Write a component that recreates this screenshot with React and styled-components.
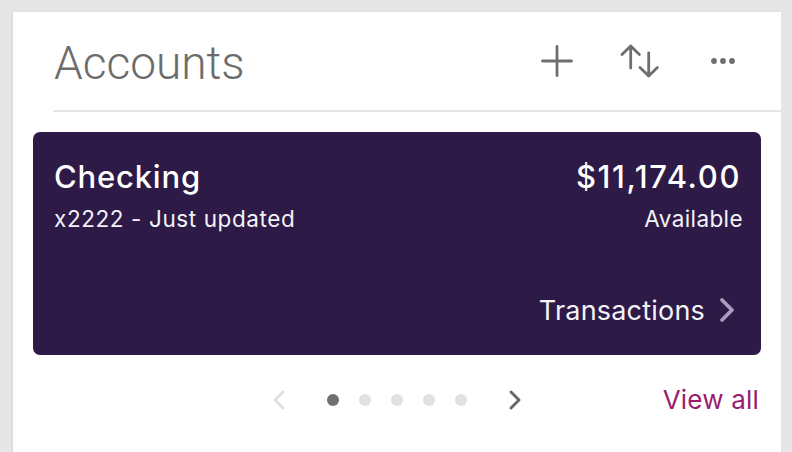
import React from "react";
import styled, { createGlobalStyle } from "styled-components";

const Global = createGlobalStyle`
  html, body { margin: 0; padding: 0; }
  body {
    background: #e6e6e6;
    font-family: Inter, "Noto Sans", sans-serif;
    width: 792px;
    height: 452px;
    overflow: hidden;
  }
`;

const Panel = styled.section`
  margin: 12px 11px 0 13px;
  height: 460px;
  background: #ffffff;
  box-shadow: -1px 0 3px rgba(0, 0, 0, 0.06);
  display: flex;
  flex-direction: column;
`;

const Header = styled.header`
  height: 98px;
  display: flex;
  align-items: center;
  padding: 0 44px 0 1px;
  border-bottom: 2px solid #e6e6e6;
  margin-left: 40px;
`;

const Title = styled.h1`
  flex: 1;
  margin: 0;
  font-family: Roboto, "Liberation Sans", sans-serif;
  font-weight: 300;
  font-size: 46px;
  color: #6c6c6c;
  letter-spacing: 0px;
  padding-top: 4px;
`;

const Actions = styled.div`
  display: flex;
  align-items: center;
`;

const IconButton = styled.button`
  background: none;
  border: 0;
  padding: 0;
  margin-left: ${(p) => p.$gap || 0}px;
  display: flex;
  align-items: center;
  justify-content: center;
  color: #6e6e6e;
`;

const AccountCard = styled.div`
  margin: 20px 20px 0 20px;
  height: 223px;
  background: #2d1a46;
  border-radius: 7px;
  color: #ffffff;
  padding: 26px 21px 0 21px;
  box-sizing: border-box;
  display: flex;
  flex-direction: column;
`;

const CardTop = styled.div`
  display: flex;
  justify-content: space-between;
  align-items: flex-start;
`;

const Col = styled.div`
  display: flex;
  flex-direction: column;
  align-items: ${(p) => (p.$right ? "flex-end" : "flex-start")};
`;

const Name = styled.div`
  font-size: 31px;
  font-weight: 500;
  line-height: 38px;
  letter-spacing: 0.8px;
`;

const Amount = styled.div`
  font-size: 31px;
  font-weight: 500;
  line-height: 38px;
  letter-spacing: 1.6px;
  margin-right: -1px;
`;

const Sub = styled.div`
  font-size: 22.5px;
  line-height: 28px;
  margin-top: 9px;
  letter-spacing: ${(p) => (p.$wide ? 0.4 : 0.6)}px;
  margin-right: ${(p) => (p.$wide ? -3 : 0)}px;
  color: #f4f2f7;
`;

const CardFooter = styled.div`
  margin-top: auto;
  display: flex;
  justify-content: flex-end;
  align-items: center;
  height: 78px;
  padding-bottom: 12px;
  box-sizing: border-box;
  margin-right: 5px;
`;

const FooterLink = styled.a`
  display: flex;
  align-items: center;
  gap: 14px;
  font-size: 27px;
  letter-spacing: 0.2px;
  color: #f4f2f7;
  text-decoration: none;
`;

const BottomRow = styled.div`
  display: grid;
  grid-template-columns: 1fr auto 1fr;
  align-items: center;
  height: 88px;
  padding-top: 2px;
`;

const Pager = styled.div`
  grid-column: 2;
  display: flex;
  align-items: center;
  margin-top: -2px;
`;

const Dots = styled.div`
  display: flex;
  gap: 20px;
  margin: 0 41px;
`;

const Dot = styled.span`
  width: 12px;
  height: 12px;
  border-radius: 50%;
  background: ${(p) => (p.$active ? "#707070" : "#e2e2e2")};
`;

const ViewAll = styled.a`
  grid-column: 3;
  justify-self: end;
  margin-right: 22px;
  font-size: 26px;
  letter-spacing: 0.2px;
  color: #9a1d6d;
  text-decoration: none;
  margin-top: -3px;
`;

const Chevron = ({ dir = "right", color, w = 14, h = 24, sw = 3 }) => (
  <svg width={w} height={h} viewBox={`0 0 ${w} ${h}`} fill="none">
    <path
      d={
        dir === "right"
          ? `M3 4 L${w - 3} ${h / 2} L3 ${h - 4}`
          : `M${w - 3} 4 L3 ${h / 2} L${w - 3} ${h - 4}`
      }
      stroke={color}
      strokeWidth={sw}
      strokeLinecap="round"
      strokeLinejoin="round"
    />
  </svg>
);

export default function App() {
  return (
    <>
      <Global />
      <Panel>
        <Header>
          <Title>Accounts</Title>
          <Actions>
            <IconButton aria-label="Add">
              <svg width="32" height="32" viewBox="0 0 32 32">
                <path d="M16 1.5 V30.5 M1.5 16 H30.5" stroke="#6e6e6e" strokeWidth="2.8" strokeLinecap="round" />
              </svg>
            </IconButton>
            <IconButton aria-label="Sort" $gap={45}>
              <svg width="42" height="36" viewBox="0 0 42 36" fill="none">
                <path d="M12.7 3 V25 M4 11.5 L12.7 3 L21.4 11.5" stroke="#6e6e6e" strokeWidth="2.8" strokeLinecap="round" strokeLinejoin="round" />
                <path d="M30.7 10 V33 M22 24.5 L30.7 33 L39.4 24.5" stroke="#6e6e6e" strokeWidth="2.8" strokeLinecap="round" strokeLinejoin="round" />
              </svg>
            </IconButton>
            <IconButton aria-label="More" $gap={49}>
              <svg width="28" height="8" viewBox="0 0 28 8">
                <circle cx="5" cy="4" r="2.9" fill="#6e6e6e" />
                <circle cx="14" cy="4" r="2.9" fill="#6e6e6e" />
                <circle cx="23" cy="4" r="2.9" fill="#6e6e6e" />
              </svg>
            </IconButton>
          </Actions>
        </Header>

        <AccountCard>
          <CardTop>
            <Col>
              <Name>Checking</Name>
              <Sub>x2222 - Just updated</Sub>
            </Col>
            <Col $right>
              <Amount>$11,174.00</Amount>
              <Sub $wide>Available</Sub>
            </Col>
          </CardTop>
          <CardFooter>
            <FooterLink href="#">
              Transactions
              <Chevron dir="right" color="#a79dba" w={16} h={28} sw={3.8} />
            </FooterLink>
          </CardFooter>
        </AccountCard>

        <BottomRow>
          <Pager>
            <Chevron dir="left" color="#dedede" w={14} h={24} sw={2.6} />
            <Dots>
              <Dot $active />
              <Dot />
              <Dot />
              <Dot />
              <Dot />
            </Dots>
            <Chevron dir="right" color="#6a6a6a" w={14} h={24} sw={3} />
          </Pager>
          <ViewAll href="#">View all</ViewAll>
        </BottomRow>
      </Panel>
    </>
  );
}
